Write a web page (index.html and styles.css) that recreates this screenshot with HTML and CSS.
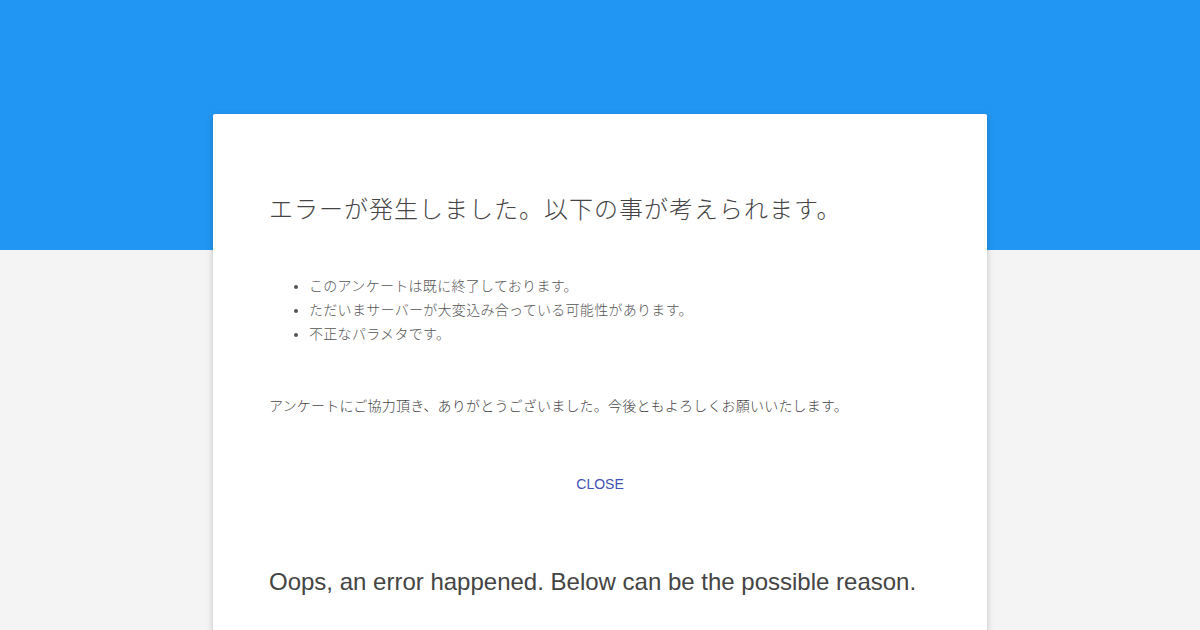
FILE: index.html
```html
<!DOCTYPE html>
<html lang="ja">
<head>
    <meta charset="UTF-8">
    <meta name="viewport" content="width=device-width, initial-scale=1.0">
    <title>エラー</title>
    <link rel="stylesheet" href="styles.css">
</head>
<body>
    <header class="top-bar"></header>
    <main class="page">
        <div class="error-card">
            <section class="error-section">
                <h2 class="error-title ja">エラーが発生しました。以下の事が考えられます。</h2>
                <ul class="reason-list ja">
                    <li>このアンケートは既に終了しております。</li>
                    <li>ただいまサーバーが大変込み合っている可能性があります。</li>
                    <li>不正なパラメタです。</li>
                </ul>
                <p class="thanks ja">アンケートにご協力頂き、ありがとうございました。今後ともよろしくお願いいたします。</p>
                <div class="actions">
                    <button class="close-btn" type="button">CLOSE</button>
                </div>
            </section>
            <section class="error-section">
                <h2 class="error-title">Oops, an error happened. Below can be the possible reason.</h2>
            </section>
        </div>
    </main>
</body>
</html>
```

FILE: styles.css
```css
body {
    margin: 0;
    padding: 0;
    background-color: #f4f4f4;
    font-family: "Liberation Sans", "Noto Sans CJK JP", sans-serif;
    color: #444;
    overflow: hidden;
}

.top-bar {
    height: 250px;
    background-color: #2196f3;
}

.page {
    display: flex;
    justify-content: center;
    margin-top: -136px;
}

.error-card {
    width: 774px;
    background-color: #fff;
    border-radius: 2px;
    box-shadow: 0 2px 6px rgba(0, 0, 0, 0.22);
    padding: 56px 56px 0;
    box-sizing: border-box;
    min-height: 600px;
}

.error-section {
    padding-top: 24px;
    padding-bottom: 40px;
}

/* japanese text: thin gothic, full-width spacing */
.ja {
    font-weight: 300;
    text-spacing-trim: space-all;
}

.error-title {
    margin: 0;
    font-size: 24px;
    font-weight: normal;
    line-height: 32px;
    color: #444;
}

.error-title.ja {
    font-weight: 300;
    letter-spacing: 1px;
}

.reason-list {
    margin: 48px 0 0;
    padding-left: 40px;
    font-size: 14px;
    line-height: 24px;
    color: #555;
    letter-spacing: 0.3px;
}

.thanks {
    margin: 48px 0 0;
    font-size: 14px;
    line-height: 24px;
    color: #444;
    letter-spacing: 0.2px;
}

.actions {
    display: flex;
    justify-content: center;
    margin-top: 48px;
}

.close-btn {
    background: none;
    border: none;
    font-family: "Liberation Sans", sans-serif;
    font-size: 14px;
    color: #3f51b5;
    height: 36px;
    padding: 0 16px;
    cursor: pointer;
}
```
